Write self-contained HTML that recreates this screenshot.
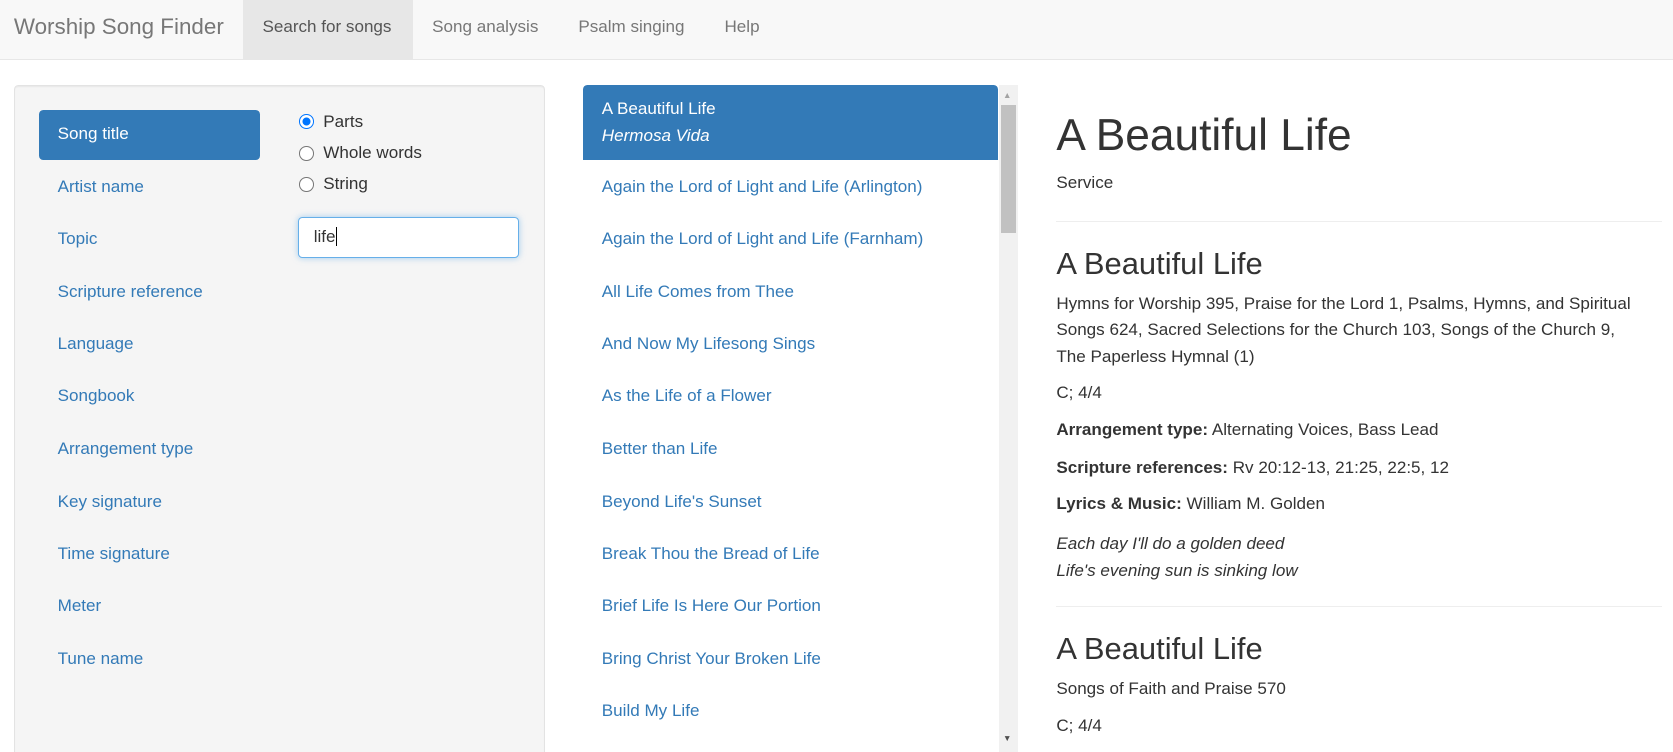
<!DOCTYPE html>
<html><head><meta charset="utf-8"><style>
html{zoom:1.0670;overflow:hidden;height:705px}
body{margin:0;width:1568px;height:705px;overflow:hidden;background:#fff;font-family:"Liberation Sans",Arial,sans-serif;font-size:16px;color:#333;position:relative}
.a{position:absolute;white-space:nowrap}
.nav{position:absolute;left:0;top:0;width:1568px;height:55px;background:#f8f8f8;border-bottom:1px solid #e7e7e7}
.nav .a{top:0;line-height:51px;color:#777}
.panel{position:absolute;left:13px;top:80px;width:496px;height:640px;background:#f5f5f5;border:1px solid #e3e3e3;border-radius:4px;box-shadow:inset 0 1px 1px rgba(0,0,0,.05)}
.pill{color:#337ab7;left:54px}
.li{color:#337ab7;left:564px}
.radio{width:12px;height:12px;border:1px solid #767676;border-radius:50%;background:#fff;position:absolute;left:280px}
</style></head><body>
<div class="nav">
<div class="a" style="left:13px;font-size:21px;line-height:50px">Worship Song Finder</div>
<div class="a" style="left:228px;width:159px;height:55px;background:#e7e7e7"></div>
<div class="a" style="left:246px;color:#555">Search for songs</div>
<div class="a" style="left:405px">Song analysis</div>
<div class="a" style="left:542px">Psalm singing</div>
<div class="a" style="left:679px">Help</div>
</div>
<div class="panel"></div>
<div class="a" style="left:37px;top:103px;width:207px;height:47px;background:#337ab7;border-radius:4px"></div>
<div class="a" style="left:54px;top:116px;color:#fff">Song title</div>
<div class="a pill" style="top:166px">Artist name</div>
<div class="a pill" style="top:215px">Topic</div>
<div class="a pill" style="top:264px">Scripture reference</div>
<div class="a pill" style="top:313px">Language</div>
<div class="a pill" style="top:362px">Songbook</div>
<div class="a pill" style="top:411px">Arrangement type</div>
<div class="a pill" style="top:461px">Key signature</div>
<div class="a pill" style="top:510px">Time signature</div>
<div class="a pill" style="top:559px">Meter</div>
<div class="a pill" style="top:608px">Tune name</div>
<div class="radio" style="top:107px;border:1px solid #0075ff;background:radial-gradient(circle,#0075ff 0 3.5px,#fff 4px)"></div>
<div class="radio" style="top:137px"></div>
<div class="radio" style="top:166px"></div>
<div class="a" style="left:303px;top:105px">Parts</div>
<div class="a" style="left:303px;top:134px">Whole words</div>
<div class="a" style="left:303px;top:163px">String</div>
<div class="a" style="left:279px;top:203px;width:206px;height:37px;background:#fff;border:1px solid #66afe9;border-radius:4px;box-shadow:0 0 6px rgba(102,175,233,.6)"></div>
<div class="a" style="left:294px;top:213px">life<span style="border-left:1px solid #000"> </span></div>
<div class="a" style="left:546px;top:80px;width:389px;height:70px;background:#337ab7;border-radius:4px 4px 0 0"></div>
<div class="a" style="left:564px;top:93px;color:#fff">A Beautiful Life</div>
<div class="a" style="left:564px;top:118px;color:#fff;font-style:italic">Hermosa Vida</div>
<div class="a li" style="top:166px">Again the Lord of Light and Life (Arlington)</div>
<div class="a li" style="top:215px">Again the Lord of Light and Life (Farnham)</div>
<div class="a li" style="top:264px">All Life Comes from Thee</div>
<div class="a li" style="top:313px">And Now My Lifesong Sings</div>
<div class="a li" style="top:362px">As the Life of a Flower</div>
<div class="a li" style="top:411px">Better than Life</div>
<div class="a li" style="top:461px">Beyond Life's Sunset</div>
<div class="a li" style="top:510px">Break Thou the Bread of Life</div>
<div class="a li" style="top:559px">Brief Life Is Here Our Portion</div>
<div class="a li" style="top:608px">Bring Christ Your Broken Life</div>
<div class="a li" style="top:657px">Build My Life</div>
<div class="a" style="left:936px;top:80px;width:18px;height:625px;background:#f1f1f1"></div>
<div class="a" style="left:938px;top:98px;width:14px;height:120px;background:#c1c1c1"></div>
<div class="a" style="left:940px;top:84px;font-size:8px;color:#a3a3a3">▲</div>
<div class="a" style="left:940px;top:687px;font-size:8px;color:#505050">▼</div>
<div class="a" style="left:990px;top:102px;font-size:41.5px;line-height:50px">A Beautiful Life</div>
<div class="a" style="left:990px;top:162px">Service</div>
<div class="a" style="left:990px;top:207px;width:568px;border-top:1px solid #eee"></div>
<div class="a" style="left:990px;top:231px;font-size:29px;line-height:34px">A Beautiful Life</div>
<div class="a" style="left:990px;top:273px;line-height:24.5px;white-space:normal;width:560px">Hymns for Worship 395, Praise for the Lord 1, Psalms, Hymns, and Spiritual Songs 624, Sacred Selections for the Church 103, Songs of the Church 9,<br>The Paperless Hymnal (1)</div>
<div class="a" style="left:990px;top:359px">C; 4/4</div>
<div class="a" style="left:990px;top:394px"><b>Arrangement type:</b> Alternating Voices, Bass Lead</div>
<div class="a" style="left:990px;top:429px"><b>Scripture references:</b> Rv 20:12-13, 21:25, 22:5, 12</div>
<div class="a" style="left:990px;top:463px"><b>Lyrics &amp; Music:</b> William M. Golden</div>
<div class="a" style="left:990px;top:498px;font-style:italic;line-height:24.5px">Each day I'll do a golden deed<br>Life's evening sun is sinking low</div>
<div class="a" style="left:990px;top:568px;width:568px;border-top:1px solid #eee"></div>
<div class="a" style="left:990px;top:591px;font-size:29px;line-height:34px">A Beautiful Life</div>
<div class="a" style="left:990px;top:636px">Songs of Faith and Praise 570</div>
<div class="a" style="left:990px;top:671px">C; 4/4</div>
</body></html>
